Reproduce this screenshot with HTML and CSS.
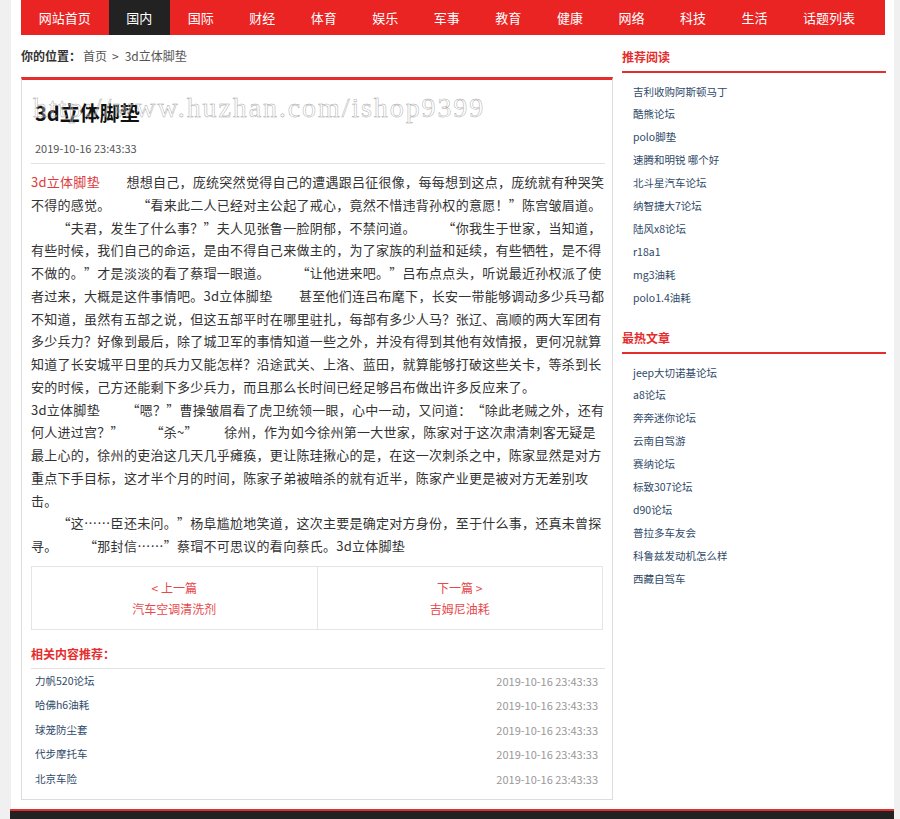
FILE: index.html
```html
<!DOCTYPE html>
<html lang="zh-CN">
<head>
<meta charset="utf-8">
<title>3d立体脚垫</title>
<link rel="stylesheet" href="styles.css">
</head>
<body>
<div class="page">
  <div class="inner">
    <nav class="nav">
      <a href="#">网站首页</a>
      <a href="#" class="active">国内</a>
      <a href="#">国际</a>
      <a href="#">财经</a>
      <a href="#">体育</a>
      <a href="#">娱乐</a>
      <a href="#">军事</a>
      <a href="#">教育</a>
      <a href="#">健康</a>
      <a href="#">网络</a>
      <a href="#">科技</a>
      <a href="#">生活</a>
      <a href="#">话题列表</a>
    </nav>
    <div class="layout">
      <div class="main">
        <div class="crumb"><b>你的位置：</b><a href="#">首页</a><span class="sep">&gt;</span><a href="#">3d立体脚垫</a></div>
        <div class="article">
          <h1 class="title">3d立体脚垫</h1>
          <div class="watermark">http://www.huzhan.com/ishop9399</div>
          <div class="date">2019-10-16 23:43:33</div>
          <div class="content">
            <p><a href="#" class="kw lat">3d立体脚垫</a>　　想想自己，庞统突然觉得自己的遭遇跟吕征很像，每每想到这点，庞统就有种哭笑<br>不得的感觉。　　“看来此二人已经对主公起了戒心，竟然不惜违背孙权的意愿！”陈宫皱眉道。</p>
            <p>　　“夫君，发生了什么事？”夫人见张鲁一脸阴郁，不禁问道。　　“你我生于世家，当知道，<br>有些时候，我们自己的命运，是由不得自己来做主的，为了家族的利益和延续，有些牺牲，是不得<br>不做的。”才是淡淡的看了蔡瑁一眼道。　　“让他进来吧。”吕布点点头，听说最近孙权派了使<br>者过来，大概是这件事情吧。<span class="lat">3d立体脚垫</span>　　甚至他们连吕布麾下，长安一带能够调动多少兵马都<br>不知道，虽然有五部之说，但这五部平时在哪里驻扎，每部有多少人马？张辽、高顺的两大军团有<br>多少兵力？好像到最后，除了城卫军的事情知道一些之外，并没有得到其他有效情报，更何况就算<br>知道了长安城平日里的兵力又能怎样？沿途武关、上洛、蓝田，就算能够打破这些关卡，等杀到长<br>安的时候，己方还能剩下多少兵力，而且那么长时间已经足够吕布做出许多反应来了。</p>
            <p><span class="lat">3d立体脚垫</span>　　“嗯？”曹操皱眉看了虎卫统领一眼，心中一动，又问道：“除此老贼之外，还有<br>何人进过宫？”　　“杀<span class="lat">~</span>”　　徐州，作为如今徐州第一大世家，陈家对于这次肃清刺客无疑是<br>最上心的，徐州的吏治这几天几乎瘫痪，更让陈珪揪心的是，在这一次刺杀之中，陈家显然是对方<br>重点下手目标，这才半个月的时间，陈家子弟被暗杀的就有近半，陈家产业更是被对方无差别攻<br>击。</p>
            <p>　　“这……臣还未问。”杨阜尴尬地笑道，这次主要是确定对方身份，至于什么事，还真未曾探<br>寻。　　“那封信……”蔡瑁不可思议的看向蔡氏。<span class="lat">3d立体脚垫</span></p>
          </div>
          <div class="pager">
            <a href="#" class="pager-cell"><span>&lt; 上一篇</span><span>汽车空调清洗剂</span></a>
            <a href="#" class="pager-cell"><span>下一篇 &gt;</span><span>吉姆尼油耗</span></a>
          </div>
          <h3 class="related-title">相关内容推荐：</h3>
          <ul class="related">
            <li><a href="#">力帆520论坛</a><span class="time">2019-10-16 23:43:33</span></li>
            <li><a href="#">哈佛h6油耗</a><span class="time">2019-10-16 23:43:33</span></li>
            <li><a href="#">球笼防尘套</a><span class="time">2019-10-16 23:43:33</span></li>
            <li><a href="#">代步摩托车</a><span class="time">2019-10-16 23:43:33</span></li>
            <li><a href="#">北京车险</a><span class="time">2019-10-16 23:43:33</span></li>
          </ul>
        </div>
      </div>
      <aside class="side">
        <h3 class="side-title">推荐阅读</h3>
        <ul class="side-list">
          <li><a href="#">吉利收购阿斯顿马丁</a></li>
          <li><a href="#">酷熊论坛</a></li>
          <li><a href="#">polo脚垫</a></li>
          <li><a href="#">速腾和明锐 哪个好</a></li>
          <li><a href="#">北斗星汽车论坛</a></li>
          <li><a href="#">纳智捷大7论坛</a></li>
          <li><a href="#">陆风x8论坛</a></li>
          <li><a href="#">r18a1</a></li>
          <li><a href="#">mg3油耗</a></li>
          <li><a href="#">polo1.4油耗</a></li>
        </ul>
        <h3 class="side-title">最热文章</h3>
        <ul class="side-list">
          <li><a href="#">jeep大切诺基论坛</a></li>
          <li><a href="#">a8论坛</a></li>
          <li><a href="#">奔奔迷你论坛</a></li>
          <li><a href="#">云南自驾游</a></li>
          <li><a href="#">赛纳论坛</a></li>
          <li><a href="#">标致307论坛</a></li>
          <li><a href="#">d90论坛</a></li>
          <li><a href="#">普拉多车友会</a></li>
          <li><a href="#">科鲁兹发动机怎么样</a></li>
          <li><a href="#">西藏自驾车</a></li>
        </ul>
      </aside>
    </div>
  </div>
  <footer class="footer"></footer>
</div>
</body>
</html>
```

FILE: styles.css
```css
* {
  box-sizing: border-box;
  margin: 0;
  padding: 0;
}

body {
  background: #f0f0f0;
  font-family: "Noto Sans CJK SC", "Noto Sans", sans-serif;
  color: #333;
  text-spacing-trim: space-all;
}

a {
  text-decoration: none;
  color: inherit;
}

ul {
  list-style: none;
}

.page {
  width: 883px;
  margin-left: 11px;
  min-height: 819px;
  background: #fff;
}

.inner {
  width: 864px;
  margin-left: 10px;
}

/* navigation */
.nav {
  display: flex;
  height: 35px;
  background: #ea2323;
}

.nav a {
  padding: 0 17.75px;
  font-size: 13px;
  line-height: 35px;
  color: #fff;
  white-space: nowrap;
}

.nav a.active {
  background: #222;
}

/* layout */
.layout {
  display: flex;
  align-items: flex-start;
  gap: 9px;
}

.main {
  width: 592px;
  flex: none;
}

.crumb {
  height: 42px;
  font-size: 12px;
  line-height: 42px;
  color: #555;
  white-space: nowrap;
}

.crumb b {
  margin-right: 2px;
  color: #333;
}

.crumb .sep {
  margin: 0 6px 0 5px;
}

/* article box */
.article {
  position: relative;
  border: 1px solid #ddd;
  border-top: 3px solid #e52d2d;
  padding: 0 5px 8px 9px;
}

.title {
  margin-top: 18px;
  padding-left: 4px;
  font-size: 20px;
  line-height: 30px;
  font-weight: bold;
  color: #111;
}

.watermark {
  position: absolute;
  left: 11px;
  top: 12px;
  font-family: "Liberation Serif", serif;
  font-size: 28px;
  line-height: 32px;
  letter-spacing: 1.9px;
  color: rgba(255, 255, 255, 0.25);
  -webkit-text-stroke: 0.45px #a5a5a5;
  white-space: nowrap;
  pointer-events: none;
}

.date {
  margin: 10px 2px 0 0;
  padding: 0 0 5px 4px;
  font-size: 11px;
  line-height: 20px;
  color: #555;
  border-bottom: 1px solid #e3e3e3;
}

.content {
  margin-top: 7px;
  font-size: 13px;
  letter-spacing: 0.27px;
  line-height: 22.75px;
  color: #333;
  font-variant-east-asian: full-width;
}

.content .lat {
  font-variant-east-asian: normal;
}

.content .kw {
  color: #e03a3e;
}

/* prev / next */
.pager {
  display: flex;
  margin: 8px 4px 0 0;
  border: 1px solid #e5e5e5;
}

.pager-cell {
  flex: 1;
  display: flex;
  flex-direction: column;
  align-items: center;
  padding: 10px 0;
  font-size: 12px;
  line-height: 21px;
  color: #e8484a;
}

.pager-cell + .pager-cell {
  border-left: 1px solid #e5e5e5;
}

/* related */
.related-title {
  margin: 14px 2px 0 0;
  padding-bottom: 4px;
  font-size: 12px;
  line-height: 20px;
  font-weight: bold;
  color: #e52d2d;
  border-bottom: 1px solid #e3e3e3;
}

.related li {
  display: flex;
  justify-content: space-between;
  padding: 0 9px 0 4px;
  line-height: 24.5px;
}

.related a {
  font-size: 10.5px;
  color: #2f4a68;
}

.related .time {
  font-size: 11px;
  color: #999;
}

/* sidebar */
.side {
  width: 264px;
  flex: none;
}

.side-title {
  margin-top: 12px;
  padding-bottom: 4px;
  font-size: 12px;
  line-height: 20px;
  font-weight: bold;
  color: #e52d2d;
  border-bottom: 2px solid #e52d2d;
}

.side-list + .side-title {
  margin-top: 18.5px;
}

.side-list {
  padding: 7.5px 0 0 11px;
}

.side-list li {
  font-size: 10.5px;
  line-height: 22.9px;
}

.side-list a {
  color: #2f4a68;
}

/* footer */
.footer {
  margin-top: 9px;
  margin-left: -1px;
  height: 40px;
  background: #222;
  border-top: 2px solid #e52d2d;
}
```
